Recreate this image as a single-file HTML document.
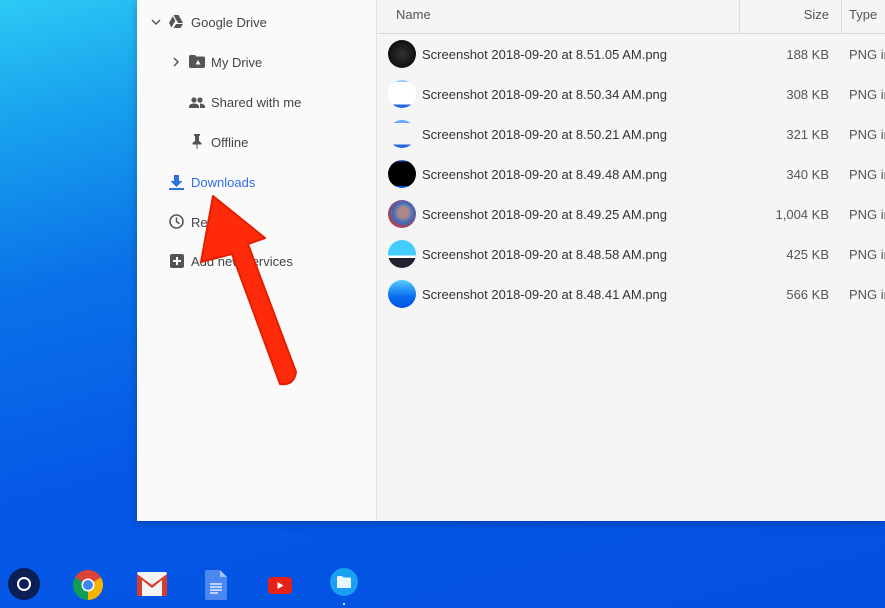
<!DOCTYPE html>
<html><head><style>
*{margin:0;padding:0;box-sizing:border-box}
body{width:885px;height:608px;overflow:hidden;position:relative;font-family:"Liberation Sans",Roboto,sans-serif;
background:linear-gradient(165deg,#2ccaf4 0%,#18a2ee 15%,#0a72e8 35%,#0558e6 60%,#0350e0 100%)}
.win{position:absolute;left:137px;top:0;width:748px;height:521px;background:#f5f5f5;box-shadow:0 2px 8px rgba(0,0,0,.25)}
.side{position:absolute;left:0;top:0;width:240px;height:521px;background:#fafafa;border-right:1px solid #e0e0e0}
.it{position:absolute;font-size:13px;color:#444;white-space:nowrap}
.ic{position:absolute}
.list{position:absolute;left:241px;top:0;right:0;height:521px;overflow:hidden}
.hdr{height:34px;border-bottom:1px solid #d6d6d6;position:relative;font-size:13px;color:#555}
.row{position:absolute;left:0;right:0;height:40px;font-size:13px;color:#333;white-space:nowrap}
.th{position:absolute;left:10px;top:6px;width:28px;height:28px;border-radius:50%;overflow:hidden}
.nm{position:absolute;left:44px;top:13px}
.sz{position:absolute;right:56px;top:13px;color:#555}
.tp{position:absolute;left:471px;top:13px;color:#555;white-space:nowrap}
.shelf{position:absolute;top:568px}
</style></head><body>
<div class="win">
 <div class="side">
  <svg class="ic" style="left:14px;top:17px" width="10" height="10" viewBox="0 0 10 10"><path d="M1 3l4 4 4-4" fill="none" stroke="#555" stroke-width="1.5"/></svg>
  <svg class="ic" style="left:32px;top:15px" width="14" height="13" viewBox="0 0 14 13"><path d="M4.5 0h5l4.5 8h-5zM3.8 1.3L6.3 5.7 2.5 12.5 0 8zM7 9h7l-2.5 4H4.5z" fill="#555"/></svg>
  <div class="it" style="left:54px;top:15px">Google Drive</div>
  <svg class="ic" style="left:35px;top:57px" width="8" height="10" viewBox="0 0 8 10"><path d="M2 1l4 4-4 4" fill="none" stroke="#555" stroke-width="1.5"/></svg>
  <svg class="ic" style="left:52px;top:55px" width="16" height="13" viewBox="0 0 16 13"><path d="M0 1.5C0 .7.6 0 1.4 0H6l1.5 1.5h7c.8 0 1.5.7 1.5 1.5v8.5c0 .8-.7 1.5-1.5 1.5h-13C.6 13 0 12.3 0 11.5z" fill="#555"/><path d="M9 5l2.5 4.5h-5z" fill="#fafafa"/></svg>
  <div class="it" style="left:74px;top:55px">My Drive</div>
  <svg class="ic" style="left:52px;top:97px" width="16" height="11" viewBox="0 0 16 11"><circle cx="5" cy="3" r="2.6" fill="#555"/><circle cx="11" cy="3" r="2.6" fill="#555"/><path d="M0 11V9.5C0 7.5 3 6.5 5 6.5s5 1 5 3V11zM11 6.5c2 0 5 1 5 3V11h-5z" fill="#555"/></svg>
  <div class="it" style="left:74px;top:95px">Shared with me</div>
  <svg class="ic" style="left:55px;top:134px" width="10" height="15" viewBox="0 0 10 15"><path d="M2 0h6v1.5L7 2v5l2.5 2v1.5h-4V15h-1v-4.5h-4V9L3 7V2L2 1.5z" fill="#555"/></svg>
  <div class="it" style="left:74px;top:135px">Offline</div>
  <svg class="ic" style="left:32px;top:175px" width="15" height="15" viewBox="0 0 15 15"><path d="M5 0h5v6h3.5L7.5 12 1.5 6H5z" fill="#2f6fe0"/><rect x="0" y="13" width="15" height="2" fill="#2f6fe0"/></svg>
  <div class="it" style="left:54px;top:175px;color:#2f6fe0">Downloads</div>
  <svg class="ic" style="left:32px;top:214px" width="15" height="15" viewBox="0 0 15 15"><circle cx="7.5" cy="7.5" r="6.5" fill="none" stroke="#555" stroke-width="1.6"/><path d="M7.5 3.5v4.3l3 1.8" fill="none" stroke="#555" stroke-width="1.5"/></svg>
  <div class="it" style="left:54px;top:215px">Recent</div>
  <svg class="ic" style="left:33px;top:254px" width="14" height="14" viewBox="0 0 14 14"><rect width="14" height="14" rx="2" fill="#555"/><path d="M7 3v8M3 7h8" stroke="#fff" stroke-width="2"/></svg>
  <div class="it" style="left:54px;top:254px">Add new services</div>
 </div>
 <div class="list">
  <div class="hdr"><span style="position:absolute;left:18px;top:7px">Name</span>
   <div style="position:absolute;left:361px;top:0;width:1px;height:33px;background:#ddd"></div>
   <span style="position:absolute;right:56px;top:7px">Size</span>
   <div style="position:absolute;left:463px;top:0;width:1px;height:33px;background:#ddd"></div>
   <span style="position:absolute;left:471px;top:7px">Type</span></div>
  <div class="row" style="top:34px"><div class="th" style="background:radial-gradient(#333,#000)"></div><div class="nm">Screenshot 2018-09-20 at 8.51.05 AM.png</div><div class="sz">188 KB</div><div class="tp">PNG im</div></div>
  <div class="row" style="top:74px"><div class="th" style="background:linear-gradient(#9cf 0 8%,#fff 8% 88%,#2266dd 88%)"></div><div class="nm">Screenshot 2018-09-20 at 8.50.34 AM.png</div><div class="sz">308 KB</div><div class="tp">PNG im</div></div>
  <div class="row" style="top:114px"><div class="th" style="background:linear-gradient(#6af 0 10%,#f4f4f4 10% 88%,#2266dd 88%)"></div><div class="nm">Screenshot 2018-09-20 at 8.50.21 AM.png</div><div class="sz">321 KB</div><div class="tp">PNG im</div></div>
  <div class="row" style="top:154px"><div class="th" style="background:linear-gradient(#36c 0 6%,#000 6% 92%,#0050e0 92%)"></div><div class="nm">Screenshot 2018-09-20 at 8.49.48 AM.png</div><div class="sz">340 KB</div><div class="tp">PNG im</div></div>
  <div class="row" style="top:194px"><div class="th" style="background:radial-gradient(circle at 55% 45%,#a88 0 25%,#3a6fc0 45%,#c33 75%)"></div><div class="nm">Screenshot 2018-09-20 at 8.49.25 AM.png</div><div class="sz">1,004 KB</div><div class="tp">PNG im</div></div>
  <div class="row" style="top:234px"><div class="th" style="background:linear-gradient(#4cf 0 55%,#fff 55% 65%,#223 65%)"></div><div class="nm">Screenshot 2018-09-20 at 8.48.58 AM.png</div><div class="sz">425 KB</div><div class="tp">PNG im</div></div>
  <div class="row" style="top:274px"><div class="th" style="background:linear-gradient(#5cf,#0a6cf0 60%,#0050e0)"></div><div class="nm">Screenshot 2018-09-20 at 8.48.41 AM.png</div><div class="sz">566 KB</div><div class="tp">PNG im</div></div>
 </div>
</div>
<svg style="position:absolute;left:0;top:0" width="885" height="608">
 <path d="M213 196L265 238 248 244 296 372Q294 386 280 384L232 254 201 262Z" fill="#ff2a0a" stroke="#e02000" stroke-width="2" stroke-linejoin="round"/>
</svg>
<div class="shelf" style="left:8px;width:32px;height:32px;border-radius:50%;background:#0a1f55"><div style="position:absolute;left:9px;top:9px;width:14px;height:14px;border:2.5px solid #fff;border-radius:50%"></div></div>
<svg class="shelf" style="left:73px;top:570px" width="30" height="30" viewBox="-15 -15 30 30"><path d="M0 0L13 -7.5A15 15 0 0 0 -13 -7.5z" fill="#db4437"/><path d="M0 0L-13 -7.5A15 15 0 0 0 0 15z" fill="#0f9d58"/><path d="M0 0L0 15A15 15 0 0 0 13 -7.5z" fill="#f4b400"/><circle r="6.5" fill="#fff"/><circle r="5" fill="#4285f4"/></svg>
<svg class="shelf" style="left:137px;top:572px" width="30" height="24" viewBox="0 0 30 24"><rect width="30" height="24" rx="2" fill="#f2f2f2"/><path d="M0 2v22h5V8l10 8 10-8v16h5V2L15 13z" fill="#d23f31"/></svg>
<svg class="shelf" style="left:205px;top:570px" width="22" height="30" viewBox="0 0 22 30"><path d="M2 0h13l7 7v21a2 2 0 0 1-2 2H2a2 2 0 0 1-2-2V2a2 2 0 0 1 2-2z" fill="#4a88f0"/><path d="M15 0v7h7z" fill="#a1c2fa"/><path d="M5 14h12M5 17h12M5 20h12M5 23h8" stroke="#fff" stroke-width="1.3"/></svg>
<svg class="shelf" style="left:268px;top:577px" width="24" height="17" viewBox="0 0 24 17"><rect width="24" height="17" rx="4" fill="#e62117"/><path d="M9.5 5v7l6-3.5z" fill="#fff"/></svg>
<div class="shelf" style="left:330px;width:28px;height:28px;border-radius:50%;background:#19a0f0"><svg style="position:absolute;left:7px;top:8px" width="14" height="12" viewBox="0 0 14 12"><path d="M0 1a1 1 0 0 1 1-1h4l1.5 1.5H13a1 1 0 0 1 1 1V11a1 1 0 0 1-1 1H1a1 1 0 0 1-1-1z" fill="#e8f4ff"/></svg></div>
<div style="position:absolute;left:343px;top:603px;width:2px;height:2px;background:#cde"></div>
</body></html>
